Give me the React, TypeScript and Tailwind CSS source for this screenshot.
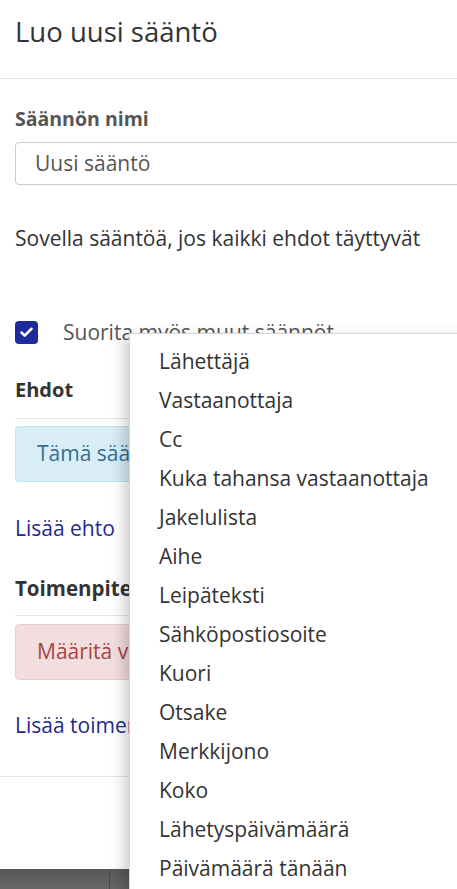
import { Check } from 'lucide-react';

const FIELDS = [
  'Lähettäjä',
  'Vastaanottaja',
  'Cc',
  'Kuka tahansa vastaanottaja',
  'Jakelulista',
  'Aihe',
  'Leipäteksti',
  'Sähköpostiosoite',
  'Kuori',
  'Otsake',
  'Merkkijono',
  'Koko',
  'Lähetyspäivämäärä',
  'Päivämäärä tänään',
];

export default function App() {
  return (
    <div className="relative w-[457px] h-[889px] overflow-hidden bg-white text-[#333] font-['Open_Sans',sans-serif]">
      {/* Modal */}
      <div className="w-[600px] flex flex-col">
        <div className="h-[79px] px-[15px] pt-[14px] border-b border-[#e5e5e5]">
          <h1 className="text-[27.5px] leading-[36px] font-normal">Luo uusi sääntö</h1>
        </div>

        <div className="px-[15px] flex flex-col">
          <label className="mt-[28px] text-[19.5px] leading-[24px] font-bold text-[#555]">Säännön nimi</label>
          <div className="mt-[11px] h-[43px] w-[520px] border border-[#ccc] rounded-[4px] flex items-center pl-[19px] text-[21px] text-[#555]">
            Uusi sääntö
          </div>

          <p className="mt-[40px] text-[21px] leading-[26px] whitespace-nowrap">Sovella sääntöä, jos kaikki ehdot täyttyvät</p>

          <div className="mt-[68px] flex items-center gap-[25px]">
            <span className="w-[23px] h-[23px] rounded-[4px] bg-[#1f2a9c] flex items-center justify-center">
              <Check className="w-[15px] h-[15px] text-white" strokeWidth={4} />
            </span>
            <span className="text-[21px] leading-[26px] text-[#555] whitespace-nowrap">Suorita myös muut säännöt</span>
          </div>

          <div className="mt-[32px] pb-[15px] border-b border-[#e5e5e5]">
            <h2 className="text-[20px] leading-[26px] font-bold">Ehdot</h2>
          </div>
          <div className="mt-[7px] h-[56px] rounded-[4px] bg-[#d9edf7] border border-[#bce8f1] flex items-center pl-[21px] text-[21px] text-[#31708f] whitespace-nowrap">
            Tämä sääntö koskee kaikkia viestejä
          </div>
          <a className="mt-[33px] text-[21px] leading-[26px] text-[#1f2a8c]">Lisää ehto</a>

          <div className="mt-[34px] pb-[14px] border-b border-[#e5e5e5]">
            <h2 className="text-[20.5px] leading-[26px] font-bold">Toimenpiteet</h2>
          </div>
          <div className="mt-[8px] h-[56px] rounded-[4px] bg-[#f2dede] border border-[#ebccd1] flex items-center pl-[21px] text-[21px] text-[#a94442] whitespace-nowrap">
            Määritä vähintään yksi toimenpide
          </div>
          <a className="mt-[32px] text-[21px] leading-[26px] text-[#1f2a8c]">Lisää toimenpide</a>
        </div>

        <div className="mt-[38px] h-[93px] border-t border-[#e5e5e5]" />
      </div>

      {/* Backdrop strip */}
      <div className="h-[20px] flex bg-gradient-to-b from-[#585858] to-[#666]">
        <div className="w-[110px] border-r border-[#474747]" />
      </div>

      {/* Dropdown menu */}
      <div className="absolute left-[129px] top-[333px] w-[360px] bg-white border border-[#d5d5d5] shadow-[-6px_4px_12px_rgba(0,0,0,0.18)] pt-[8px] pb-[8px]">
        <ul className="flex flex-col">
          {FIELDS.map((f) => (
            <li key={f} className="h-[39px] flex items-center pl-[29px] text-[21px] text-[#333] whitespace-nowrap">
              {f}
            </li>
          ))}
        </ul>
      </div>
    </div>
  );
}
